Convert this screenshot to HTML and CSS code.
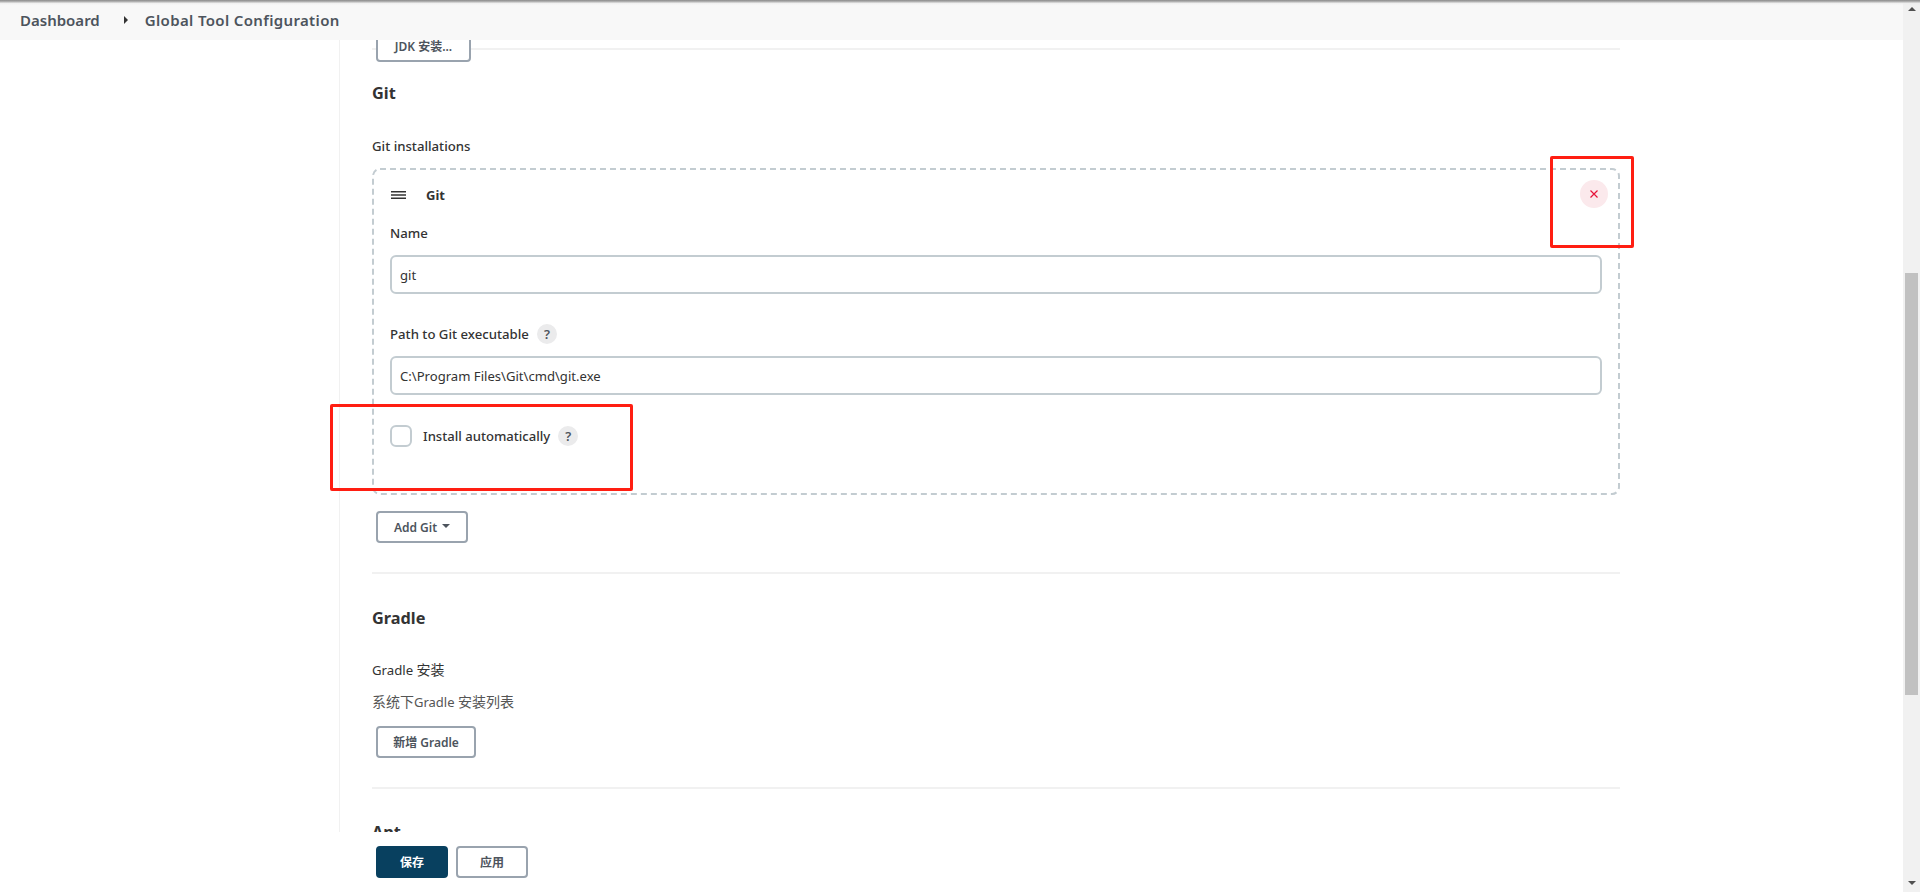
FILE: index.html
```html
<!DOCTYPE html>
<html lang="en">
<head>
<meta charset="utf-8">
<title>Global Tool Configuration</title>
<link rel="stylesheet" href="styles.css">
</head>
<body>
<div class="app">
  <div class="window">
    <header class="crumbs">
      <a class="crumb">Dashboard</a>
      <svg class="crumb-arrow" viewBox="0 0 4 8" width="4" height="8"><path d="M0 0l4 4-4 4z" fill="#333"/></svg>
      <a class="crumb crumb-wide">Global Tool Configuration</a>
    </header>
    <main class="viewport">
      <div class="side"></div>
      <div class="content">
        <button class="btn btn-top">JDK 安装...</button>
        <hr class="rule rule-under-btn">

        <h2 class="heading">Git</h2>
        <div class="label label-group">Git installations</div>
        <section class="repeat">
          <svg class="dashes" width="1248" height="327" viewBox="0 0 1248 327"><rect x="1" y="1" width="1246" height="325" rx="7" fill="none" stroke="#c3ccd1" stroke-width="2" stroke-dasharray="6 4"/></svg>
          <div class="repeat-head">
            <svg class="handle" viewBox="0 0 15 8" width="15" height="8"><path d="M0 .75h15M0 4h15M0 7.25h15" stroke="#333" stroke-width="1.3" fill="none"/></svg>
            <span class="repeat-title">Git</span>
            <button class="close" aria-label="Delete">
              <svg viewBox="0 0 10 10" width="10" height="10"><path d="M1.5 1.5l7 7M8.5 1.5l-7 7" stroke="#e6133a" stroke-width="1.2" fill="none"/></svg>
            </button>
          </div>
          <div class="label label-name">Name</div>
          <input class="field" value="git">
          <div class="label label-path">Path to Git executable <span class="help">?</span></div>
          <input class="field" value="C:\Program Files\Git\cmd\git.exe">
          <div class="check-row">
            <span class="check"></span>
            <span class="label label-check">Install automatically</span>
            <span class="help">?</span>
          </div>
        </section>
        <button class="btn btn-add">Add Git<span class="caret"></span></button>
        <hr class="rule rule-git">

        <h2 class="heading heading-gradle">Gradle</h2>
        <div class="label label-gradle">Gradle <span class="cjk">安装</span></div>
        <div class="desc"><span class="cjk">系统下</span>Gradle <span class="cjk">安装列表</span></div>
        <button class="btn btn-gradle">新增 Gradle</button>
        <hr class="rule rule-gradle">

        <h2 class="heading">Ant</h2>
      </div>
    </main>
    <footer class="actions">
      <button class="btn btn-save">保存</button>
      <button class="btn btn-apply">应用</button>
    </footer>
  </div>
  <aside class="scrollbar">
    <svg class="scroll-arrow" viewBox="0 0 8 4" width="8" height="4"><path d="M4 0l4 4H0z" fill="#505050"/></svg>
    <div class="scroll-thumb"></div>
    <svg class="scroll-arrow scroll-down" viewBox="0 0 8 4" width="8" height="4"><path d="M0 0h8L4 4z" fill="#505050"/></svg>
  </aside>
  <div class="mark mark-close"></div>
  <div class="mark mark-install"></div>
</div>
</body>
</html>
```

FILE: styles.css
```css
* { box-sizing: border-box; }
html, body { margin: 0; height: 892px; overflow: hidden; background: #fff; }
body {
  font-family: "Noto Sans", "Noto Sans CJK SC", sans-serif;
  font-size: 13px;
  color: #333;
}
.app { display: flex; height: 892px; position: relative; }
.window { width: 1903px; display: flex; flex-direction: column; }

.crumbs {
  height: 40px;
  flex: none;
  display: flex;
  align-items: center;
  padding: 0 0 0 20px;
  background: #f8f8f8;
  position: relative;
  z-index: 2;
  color: #4d545d;
  font-size: 15px;
  font-weight: 600;
}
.crumb-wide { letter-spacing: .35px; }
.app::before {
  content: "";
  position: absolute;
  z-index: 5;
  top: 0; left: 0; right: 0;
  height: 5px;
  background: linear-gradient(#8a8a8a, #b5b5b5 35%, rgba(235,235,235,.6) 65%, rgba(240,240,240,0));
}
.crumb-arrow { margin: 0 17px 0 24px; }

.viewport { height: 792px; flex: none; display: flex; overflow: hidden; }
.side { width: 339px; flex: none; }
.content {
  width: 1282px;
  flex: none;
  height: 820px;
  margin-top: -10px;
  padding-left: 32px;
  border-left: 1px solid #f1f1f1;
  padding-right: 1px;
}

.btn {
  display: block;
  height: 32px;
  margin: 0 0 0 4px;
  padding: 0;
  border: 2px solid #99a3ae;
  border-radius: 4px;
  background: #fff;
  color: #4d545d;
  font: 600 12px "Noto Sans", "Noto Sans CJK SC", sans-serif;
  position: relative;
}
.btn-top { width: 95px; z-index: 1; }
.btn-add { width: 92px; margin-top: 16px; }
.btn-gradle { width: 100px; margin-top: 14px; }
.caret {
  display: inline-block;
  margin-left: 5px;
  vertical-align: 4px;
  border: 4px solid transparent;
  border-top-color: #4d545d;
  border-bottom-width: 0;
}

.rule { height: 2px; margin: 0; border: 0; background: #f1f1f1; }
.rule-under-btn { margin-top: -14px; }
.rule-git { margin-top: 29px; }
.rule-gradle { margin-top: 29px; }

.heading { margin: 31px 0 0; font-size: 16.3px; font-weight: 700; line-height: 24px; color: #333; }
.heading-gradle { margin-top: 32px; }

.label { font-size: 13.2px; font-weight: 500; line-height: 20px; color: #333; }
.label-group { margin-top: 31px; }
.label-name { margin-top: 15px; }
.label-path { margin-top: 30px; display: flex; align-items: center; gap: 8px; }
.label-check { font-size: 13.1px; }
.label-gradle { margin-top: 30px; font-weight: 400; }
.desc { margin-top: 12px; line-height: 20px; color: #555; }
.cjk { font-size: 14px; }

.repeat {
  margin-top: 12px;
  height: 327px;
  padding: 12px 18px 0 18px;
  position: relative;
}
.dashes { position: absolute; top: 0; left: 0; }
.repeat-head { height: 28px; display: flex; align-items: center; margin-right: -6px; }
.handle { margin: 2px 20px 0 1px; }
.repeat-title { margin-top: 2px; font-size: 13px; font-weight: 700; }
.close {
  margin-left: auto;
  width: 28px;
  height: 28px;
  padding: 0;
  border: 0;
  border-radius: 50%;
  background: #fbe9ec;
  display: flex;
  align-items: center;
  justify-content: center;
}

.field {
  display: block;
  width: 1212px;
  height: 39px;
  margin-top: 12px;
  padding: 0 8px;
  border: 2px solid #c3ccd1;
  border-radius: 6px;
  background: #fff;
  color: #333;
  font: 400 13.1px "Noto Sans", sans-serif;
}
.help {
  width: 20px;
  height: 20px;
  flex: none;
  border-radius: 50%;
  background: #ebebec;
  color: #4d545d;
  font-size: 13px;
  font-weight: 600;
  line-height: 20px;
  text-align: center;
}
.check-row { margin-top: 30px; height: 22px; display: flex; align-items: center; }
.check {
  width: 22px;
  height: 22px;
  margin-right: 11px;
  border: 2px solid #c3ccd1;
  border-radius: 6px;
}
.check-row .help { margin-left: 8px; }

.actions {
  height: 60px;
  flex: none;
  background: #fff;
  display: flex;
  gap: 8px;
  padding: 14px 0 0 376px;
}
.actions .btn { width: 72px; height: 32px; margin: 0; font-size: 12px; }
.btn-save { background: #08405f; border-color: #08405f; color: #fff; font-weight: 700; }

.scrollbar {
  width: 17px;
  flex: none;
  background: #f1f1f1;
  padding: 7px 2px;
  display: flex;
  flex-direction: column;
  align-items: center;
}
.scroll-arrow { flex: none; }
.scroll-down { margin-top: auto; }
.scroll-thumb { width: 13px; height: 422px; margin-top: 262px; background: #c1c1c1; flex: none; }

.mark {
  position: absolute;
  z-index: 6;
  border: 3px solid #ff1e12;
  border-radius: 2px;
}
.mark-close { left: 1550px; top: 156px; width: 84px; height: 92px; }
.mark-install { left: 330px; top: 404px; width: 303px; height: 87px; }
```
